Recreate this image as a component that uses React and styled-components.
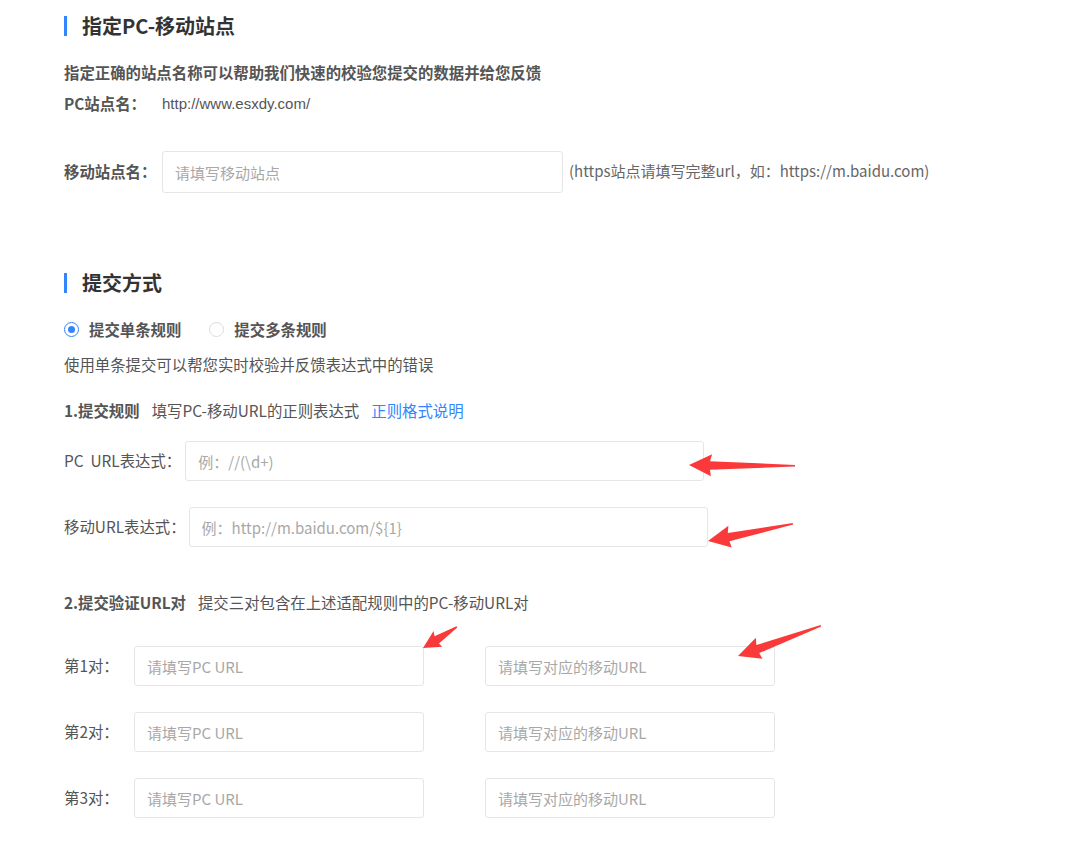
import React from 'react';
import styled, { createGlobalStyle } from 'styled-components';

const GlobalStyle = createGlobalStyle`
  html, body {
    margin: 0;
    padding: 0;
    background: #fff;
  }
  body {
    font-family: "Noto Sans CJK SC", "Noto Sans", sans-serif;
    color: #555;
  }
`;

const Page = styled.div`
  position: relative;
  padding: 16px 64px 30px;
  width: 1087px;
  box-sizing: border-box;
  font-size: 15.4px;
`;

const SectionTitle = styled.h2`
  margin: ${(p) => p.$top || 0}px 0 0;
  height: 20px;
  line-height: 20px;
  font-size: 20px;
  font-weight: 700;
  color: #333;
  border-left: 3px solid #3385ff;
  padding-left: 15px;
`;

const Line = styled.div`
  margin-top: ${(p) => p.$top || 0}px;
  line-height: 22px;
  font-weight: ${(p) => (p.$bold ? 700 : 400)};
  color: #555;
  display: flex;
  align-items: center;
`;

const FieldRow = styled.div`
  margin-top: ${(p) => p.$top || 0}px;
  display: flex;
  align-items: center;
  gap: ${(p) => p.$gap || 0}px;
  line-height: 20px;
`;

const Label = styled.span`
  width: ${(p) => (p.$width ? `${p.$width}px` : 'auto')};
  flex: none;
  font-weight: ${(p) => (p.$bold ? 700 : 400)};
  white-space: pre;
  color: #555;
  margin-top: -2px;
`;

const Value = styled.span`
  font-family: "Liberation Sans", Arial, sans-serif;
  font-size: 15px;
  color: #555;
`;

const Input = styled.input`
  box-sizing: border-box;
  width: ${(p) => p.$width}px;
  height: ${(p) => p.$height || 40}px;
  border: 1px solid #e6e6e6;
  border-radius: 3px;
  padding: 0 12px;
  font-family: inherit;
  font-size: 15px;
  color: #333;
  outline: none;
  &::placeholder {
    color: #a8a8a8;
  }
`;

const Hint = styled.span`
  margin-left: 6px;
  margin-top: -3px;
  color: #666;
  font-size: 15px;
`;

const RadioGroup = styled.div`
  margin-top: 25px;
  display: flex;
  align-items: center;
  line-height: 22px;
`;

const RadioItem = styled.label`
  display: flex;
  align-items: center;
  gap: 10px;
  font-weight: 700;
  color: #555;
  margin-right: 28px;
`;

const RadioCircle = styled.span`
  box-sizing: border-box;
  width: 15px;
  height: 15px;
  border-radius: 50%;
  border: 1px solid ${(p) => (p.$checked ? '#3385ff' : '#dcdcdc')};
  display: flex;
  align-items: center;
  justify-content: center;
  &::after {
    content: '';
    width: 7px;
    height: 7px;
    border-radius: 50%;
    background: ${(p) => (p.$checked ? '#3385ff' : 'transparent')};
  }
`;

const Strong = styled.span`
  font-weight: 700;
  margin-right: 12px;
`;

const Link = styled.a`
  color: #3385ff;
  text-decoration: none;
  margin-left: 12px;
`;

const Pairs = styled.div`
  margin-top: 33px;
  display: flex;
  flex-direction: column;
  gap: 26px;
`;

const PairInputs = styled.div`
  display: flex;
  align-items: center;
  gap: 61px;
`;

// red annotation arrows drawn on top of the form
const Overlay = styled.svg`
  position: absolute;
  left: 0;
  top: 0;
  pointer-events: none;
`;

function Arrow({ tip, tail, head = 23, wing = 11 }) {
  const dx = tail[0] - tip[0];
  const dy = tail[1] - tip[1];
  const len = Math.hypot(dx, dy);
  const ang = (Math.atan2(dy, dx) * 180) / Math.PI;
  const pts = [
    [0, 0],
    [head, -wing],
    [head - 2, -4],
    [len, -1],
    [len, 0.5],
    [head - 2, 4.5],
    [head - 1, wing],
  ]
    .map((p) => p.join(','))
    .join(' ');
  return (
    <polygon
      points={pts}
      fill="#fa3a3a"
      transform={`translate(${tip[0]} ${tip[1]}) rotate(${ang})`}
    />
  );
}

function PairRow({ label }) {
  return (
    <FieldRow>
      <Label $width={70}>{label}</Label>
      <PairInputs>
        <Input $width={290} placeholder="请填写PC URL" />
        <Input $width={290} placeholder="请填写对应的移动URL" />
      </PairInputs>
    </FieldRow>
  );
}

const pairs = ['第1对：', '第2对：', '第3对：'];

export default function App() {
  return (
    <>
      <GlobalStyle />
      <Page>
        <SectionTitle>指定PC-移动站点</SectionTitle>
        <Line $top={25} $bold>指定正确的站点名称可以帮助我们快速的校验您提交的数据并给您反馈</Line>
        <Line $top={10}>
          <Label $width={98} $bold>PC站点名：</Label>
          <Value>http://www.esxdy.com/</Value>
        </Line>
        <FieldRow $top={36}>
          <Label $width={98} $bold>移动站点名：</Label>
          <Input $width={401} $height={42} placeholder="请填写移动站点" />
          <Hint>(https站点请填写完整url，如：https://m.baidu.com)</Hint>
        </FieldRow>

        <SectionTitle $top={80}>提交方式</SectionTitle>
        <RadioGroup>
          <RadioItem>
            <RadioCircle $checked />
            提交单条规则
          </RadioItem>
          <RadioItem>
            <RadioCircle />
            提交多条规则
          </RadioItem>
        </RadioGroup>
        <Line $top={13}>使用单条提交可以帮您实时校验并反馈表达式中的错误</Line>
        <Line $top={24}>
          <Strong>1.提交规则</Strong>
          填写PC-移动URL的正则表达式
          <Link href="#">正则格式说明</Link>
        </Line>
        <FieldRow $top={20} $gap={4}>
          <Label>PC  URL表达式：</Label>
          <Input $width={519} placeholder="例：//(\d+)" />
        </FieldRow>
        <FieldRow $top={26} $gap={3}>
          <Label>移动URL表达式：</Label>
          <Input $width={519} placeholder="例：http://m.baidu.com/${1}" />
        </FieldRow>
        <Line $top={44}>
          <Strong>2.提交验证URL对</Strong>
          提交三对包含在上述适配规则中的PC-移动URL对
        </Line>
        <Pairs>
          {pairs.map((label) => (
            <PairRow key={label} label={label} />
          ))}
        </Pairs>

        <Overlay width="1087" height="850">
          <Arrow tip={[689, 465]} tail={[795, 466]} />
          <Arrow tip={[708, 541]} tail={[793, 524]} />
          <Arrow tip={[423, 648]} tail={[457, 627]} head={18} wing={9} />
          <Arrow tip={[738, 656]} tail={[821, 626]} />
        </Overlay>
      </Page>
    </>
  );
}
